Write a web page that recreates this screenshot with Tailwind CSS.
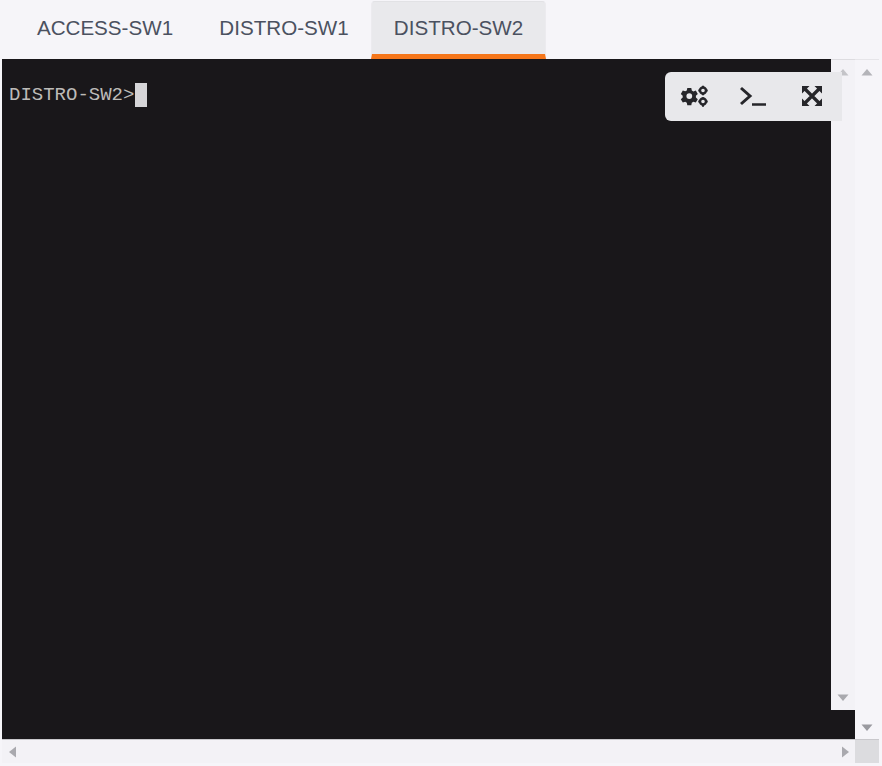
<!DOCTYPE html>
<html lang="en">
<head>
    <meta charset="UTF-8">
    <title>Console</title>
    <script src="https://cdn.jsdelivr.net/npm/@tailwindcss/browser@4"></script>
</head>
<body class="bg-white overflow-hidden">
<div class="w-[882px] h-[766px] bg-[#f6f5f9] pl-[2px] pr-[3px] pb-[3px] flex flex-col font-['Liberation_Sans',sans-serif]">

    <!-- Tabs -->
    <div class="h-[59px] flex pl-[13px] text-[20.6px] text-[#4b5160] shrink-0">
        <div class="w-[180px] flex items-center justify-center pb-[3px]">ACCESS-SW1</div>
        <div class="w-[176px] pl-[2px] flex items-center justify-center pb-[3px]">DISTRO-SW1</div>
        <div class="w-[175px] mt-[1px] bg-[#e9e9ec] border-t border-x border-t-[#e2e2e5] border-x-[#ecebef] border-b-[5px] border-b-[#f5761a] rounded-t-sm flex items-center justify-center pt-[1px]">DISTRO-SW2</div>
    </div>

    <!-- Console + scrollbars -->
    <div class="flex-1 flex min-h-0">
        <div class="w-[853px] flex bg-[#19171a] relative">
            <div class="flex-1 pl-[7px] pt-[24px]">
                <div class="flex items-center h-[24px] font-['Liberation_Mono',monospace] text-[19px] text-[#bdbbb8]">
                    <span>DISTRO-SW2&gt;</span>
                    <span class="w-[12px] h-[24px] bg-[#d6d5d8] ml-[0.5px]"></span>
                </div>
            </div>

            <!-- inner scrollbar -->
            <div class="w-[24px] h-[651px] bg-[#f3f2f6] border-t border-[#dddce0] flex flex-col items-center justify-between pt-[9px] pb-[9px]">
                <svg width="12" height="7" viewBox="0 0 12 7"><path d="M6 0l5.500 6.500H.5z" fill="#c4c4c8"/></svg>
                <svg width="12" height="7" viewBox="0 0 12 7"><path d="M6 7L.5.500h11z" fill="#a9a9ae"/></svg>
            </div>

            <!-- floating toolbar -->
            <div class="absolute left-[663px] top-[13px] w-[177px] h-[49px] bg-[#e8e8eb] rounded-l-md flex items-center pl-[15px] pb-[1px] text-[#26262a]">
                <svg class="w-[28px] h-[22px]" viewBox="0 0 28 22" fill="currentColor">
                    <path fill-rule="evenodd" d="M7.300 3h4l.5 2.500 1.600.9 2.400-.8 2 3.400-1.900 1.700v1.800l1.900 1.700-2 3.400-2.400-.8-1.600.9-.5 2.500h-4l-.5-2.500-1.600-.9-2.400.8-2-3.400 1.900-1.700v-1.800L.8 8.900l2-3.400 2.400.8 1.600-.9zM9.300 8.200a2.900 2.900 0 1 0 0 5.800 2.900 2.900 0 0 0 0-5.800z"/>
                    <circle cx="23" cy="5.500" r="3" fill="none" stroke="currentColor" stroke-width="2.400"/>
                    <circle cx="23" cy="16.500" r="3" fill="none" stroke="currentColor" stroke-width="2.400"/>
                    <path d="M22 0.800h2v1.600h-2zM22 8.600h2v1.600h-2zM18.300 4.500h1.600v2h-1.600zM26.100 4.500h1.600v2h-1.600zM22 12.300h2v1.600h-2zM22 20.100h2v1.600h-2zM18.300 15.500h1.600v2h-1.600zM26.100 15.500h1.600v2h-1.600z"/>
                </svg>
                <svg class="w-[28px] h-[22px] ml-[31px]" viewBox="0 0 28 22" fill="none" stroke="currentColor">
                    <path d="M2 3l9 8-9 8" stroke-width="3"/>
                    <path d="M13 19.500h14" stroke-width="2.500"/>
                </svg>
                <svg class="w-[22px] h-[22px] ml-[34px]" viewBox="0 0 22 22" fill="currentColor">
                    <path d="M3.500 3.500l15 15M18.500 3.500l-15 15" stroke="currentColor" stroke-width="3.200" fill="none"/>
                    <path d="M1 1h7.500L1 8.500zM21 1h-7.500L21 8.500zM1 21h7.500L1 13.500zM21 21h-7.500L21 13.500z"/>
                </svg>
            </div>
        </div>

        <!-- outer vertical scrollbar -->
        <div class="w-[24px] border-t border-[#e6e5e9] flex flex-col items-center justify-between pt-[9px] pb-[8px]">
            <svg width="12" height="7" viewBox="0 0 12 7"><path d="M6 0l5.500 6.500H.5z" fill="#b4b4b9"/></svg>
            <svg width="12" height="7" viewBox="0 0 12 7"><path d="M6 7L.5.500h11z" fill="#9a9aa0"/></svg>
        </div>
    </div>

    <!-- horizontal scrollbar -->
    <div class="h-[24px] flex shrink-0 border-t border-[#c9c8cc]">
        <div class="w-[853px] bg-[#f3f2f6] flex items-center justify-between pl-[7px] pr-[6px]">
            <svg width="8" height="12" viewBox="0 0 8 12"><path d="M0 6l7-5.500v11z" fill="#a9a9ae"/></svg>
            <svg width="8" height="12" viewBox="0 0 8 12"><path d="M8 6L1 .5v11z" fill="#a9a9ae"/></svg>
        </div>
        <div class="w-[24px] bg-[#dcdcdf]"></div>
    </div>
</div>
</body>
</html>
